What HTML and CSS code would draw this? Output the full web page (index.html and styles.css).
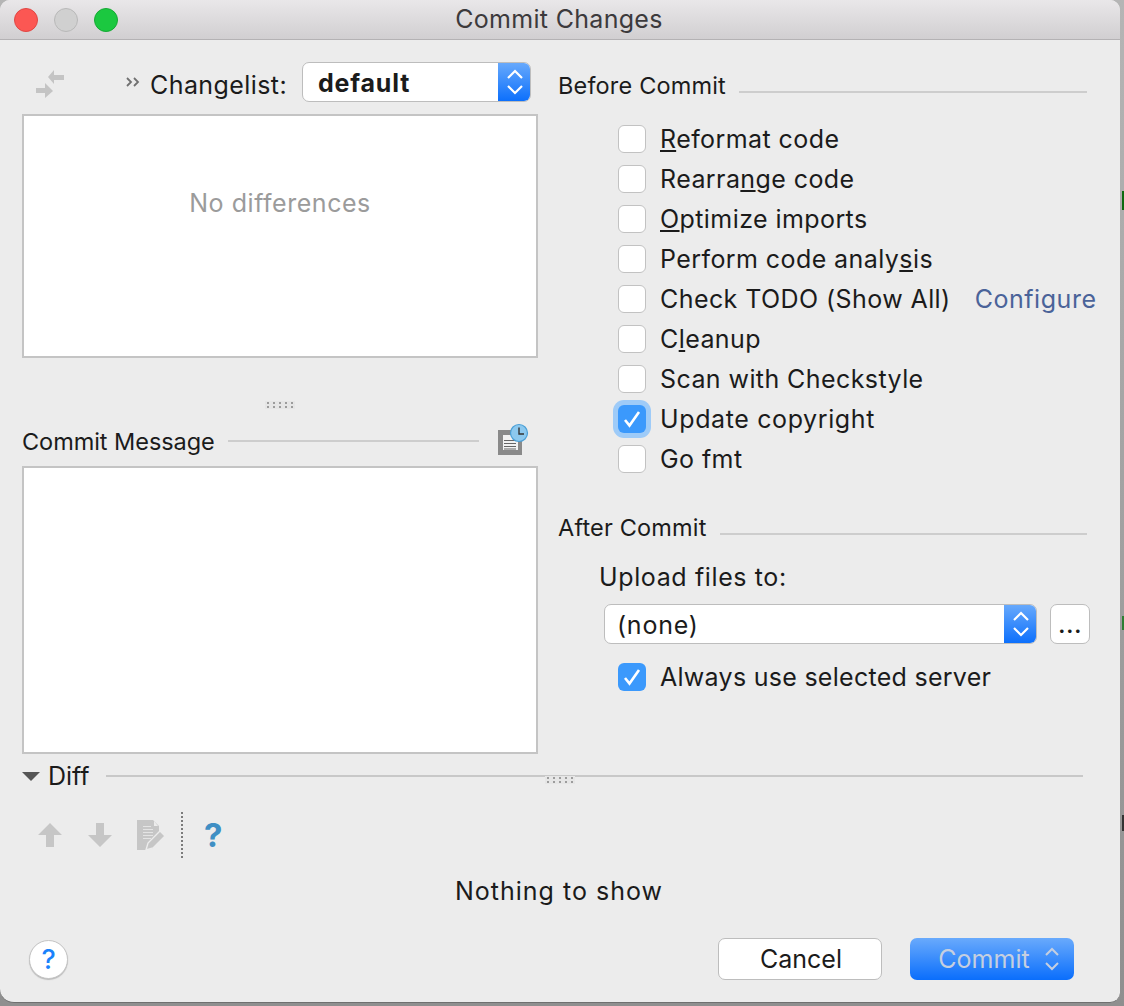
FILE: index.html
```html
<!DOCTYPE html>
<html lang="en">
<head>
    <meta charset="UTF-8">
    <title>Commit Changes</title>
    <link rel="stylesheet" href="styles.css">
</head>
<body>
    <span class="edge-mark edge-mark-a"></span>
    <span class="edge-mark edge-mark-b"></span>
    <span class="edge-mark edge-mark-c"></span>
    <div class="window">
        <div class="titlebar">
            <span class="light light-red"></span>
            <span class="light light-gray"></span>
            <span class="light light-green"></span>
            <div class="title">Commit Changes</div>
        </div>

        <div class="columns">
            <div class="left">
                <div class="changelist-row">
                    <svg class="collapse-icon" width="30" height="30" viewBox="0 0 30 30">
                        <path fill="#c4c4c4" d="M19 1l-6 7 6 7v-4h10V6H19zM10 14l8 8-8 7v-5H1v-5h9z"/>
                    </svg>
                    <svg class="more-icon" width="14" height="12" viewBox="0 0 14 12">
                        <path fill="none" stroke="#707070" stroke-width="1.8" d="M1 2l4 4-4 4M8 2l4 4-4 4"/>
                    </svg>
                    <span class="changelist-label">Changelist:</span>
                    <div class="select select-bold">
                        <span class="select-text">default</span>
                        <span class="select-arrows">
                            <svg width="18" height="28" viewBox="0 0 18 28"><path fill="none" stroke="#fff" stroke-width="2.2" d="M2 10l7-7 7 7M2 18l7 7 7-7"/></svg>
                        </span>
                    </div>
                </div>

                <div class="list-box">No differences</div>
                <div class="grip-row"><span class="grip"></span></div>

                <div class="section-head message-head">
                    <span>Commit Message</span>
                    <span class="rule"></span>
                    <svg class="history-icon" width="32" height="32" viewBox="0 0 32 32">
                        <rect x="1" y="7" width="24" height="25" fill="#8a8a8a"/>
                        <rect x="6" y="12" width="15" height="15" fill="#f2f2f2"/>
                        <path stroke="#666" stroke-width="1" d="M7 17.5h12M7 20.5h12M7 23.5h12M7 26h12"/>
                        <circle cx="22" cy="10" r="8.5" fill="#8cc8ee" stroke="#4a9fd6" stroke-width="1.2"/>
                        <path stroke="#333" stroke-width="1.4" fill="none" d="M22 4.5V11h5"/>
                    </svg>
                </div>
                <div class="message-box"></div>
            </div>

            <div class="right">
                <div class="section-head before-head">
                    <span>Before Commit</span>
                    <span class="rule"></span>
                </div>
                <div class="checks">
                    <label class="check-row"><span class="box"></span><span><u>R</u>eformat code</span></label>
                    <label class="check-row"><span class="box"></span><span>Rearra<u>n</u>ge code</span></label>
                    <label class="check-row"><span class="box"></span><span><u>O</u>ptimize imports</span></label>
                    <label class="check-row"><span class="box"></span><span>Perform code analy<u>s</u>is</span></label>
                    <label class="check-row"><span class="box"></span><span>Check TODO (Show All)</span><a class="configure">Configure</a></label>
                    <label class="check-row"><span class="box"></span><span>C<u>l</u>eanup</span></label>
                    <label class="check-row"><span class="box"></span><span>Scan with Checkstyle</span></label>
                    <label class="check-row"><span class="box box-on box-focus"><svg width="18" height="18" viewBox="0 0 18 18"><path fill="none" stroke="#fff" stroke-width="2.6" d="M2 10l4.5 5.5L16 2"/></svg></span><span class="copyright">Update copyright</span></label>
                    <label class="check-row"><span class="box"></span><span>Go fmt</span></label>
                </div>

                <div class="section-head after-head">
                    <span>After Commit</span>
                    <span class="rule"></span>
                </div>
                <div class="upload-label">Upload files to:</div>
                <div class="upload-row">
                    <div class="select select-wide">
                        <span class="select-text">(none)</span>
                        <span class="select-arrows">
                            <svg width="18" height="28" viewBox="0 0 18 28"><path fill="none" stroke="#fff" stroke-width="2.2" d="M2 10l7-7 7 7M2 18l7 7 7-7"/></svg>
                        </span>
                    </div>
                    <div class="dots-button">...</div>
                </div>
                <label class="check-row always-row"><span class="box box-on"><svg width="18" height="18" viewBox="0 0 18 18"><path fill="none" stroke="#fff" stroke-width="2.6" d="M2 10l4.5 5.5L16 2"/></svg></span><span>Always use selected server</span></label>
            </div>
        </div>

        <div class="diff-head">
            <span class="triangle"></span>
            <span>Diff</span>
            <span class="rule"><span class="grip rule-grip"></span></span>
        </div>

        <div class="diff-tools">
            <svg width="26" height="26" viewBox="0 0 26 26"><path fill="#c6c6c6" d="M13 1L25 13h-8v12H9V13H1z"/></svg>
            <svg width="26" height="26" viewBox="0 0 26 26"><path fill="#c6c6c6" d="M13 25L25 13h-8V1H9v12H1z"/></svg>
            <svg width="30" height="32" viewBox="0 0 30 32">
                <path fill="#c6c6c6" d="M1 1h16l6 6v8l-10 10-2 6H1z"/>
                <path fill="#ececec" d="M18 2l4 5h-4z"/>
                <path stroke="#e4e4e4" stroke-width="1" d="M7 7.5h8M7 10.5h10M7 13.5h10M7 16.5h10M7 19.5h8"/>
                <path fill="#ececec" d="M23 31v-8L13 31z"/>
                <path fill="#c6c6c6" stroke="#ececec" stroke-width="1.4" d="M10 31l2-7 12-12 5 5-12 12z"/>
            </svg>
            <span class="tool-sep"></span>
            <span class="blue-help">?</span>
        </div>

        <div class="nothing">Nothing to show</div>

        <div class="footer">
            <span class="help-button">?</span>
            <div class="button cancel-button">Cancel</div>
            <div class="button commit-button">
                <span>Commit</span>
                <svg width="16" height="26" viewBox="0 0 16 26"><path fill="none" stroke="#c5cfe0" stroke-width="2" d="M2 9l6-6 6 6M2 17l6 6 6-6"/></svg>
            </div>
        </div>
    </div>
</body>
</html>
```

FILE: styles.css
```css
html, body {
    margin: 0;
    padding: 0;
}
body {
    position: relative;
    width: 1124px;
    height: 1006px;
    overflow: hidden;
    background: linear-gradient(#b5b5b5, #8f8f8f);
    font-family: Inter, "Liberation Sans", Arial, sans-serif;
    font-size: 25px;
    letter-spacing: 0.42px;
    color: #1b1b1b;
}
.edge-mark {
    position: absolute;
    left: 1122px;
    width: 2px;
}
.edge-mark-a {
    top: 191px;
    height: 19px;
    background: #0d6a10;
}
.edge-mark-b {
    top: 616px;
    height: 14px;
    background: #2e7d32;
}
.edge-mark-c {
    top: 815px;
    height: 16px;
    background: #333;
}
.window {
    width: 1120px;
    height: 1003px;
    background: #ececec;
    border-radius: 10px 10px 10px 14px;
    box-sizing: border-box;
    overflow: hidden;
    border-bottom: 1px solid #6f6f6f;
}
.titlebar {
    position: relative;
    display: flex;
    align-items: center;
    gap: 16px;
    height: 40px;
    box-sizing: border-box;
    padding-left: 14px;
    background: linear-gradient(#e9e7e9, #d1cfd1);
    border-bottom: 1px solid #b4b2b4;
}
.light {
    width: 24px;
    height: 24px;
    box-sizing: border-box;
    border-radius: 50%;
    border: 1px solid;
}
.light-red {
    background: #fc5753;
    border-color: #df4744;
}
.light-gray {
    background: #d0d0d0;
    border-color: #b8b8b8;
}
.light-green {
    background: #1bc840;
    border-color: #16a934;
}
.title {
    position: absolute;
    left: 0;
    right: 2px;
    top: 4px;
    text-align: center;
    letter-spacing: 0.3px;
    color: #3c3a3c;
}

.columns {
    display: flex;
    padding-left: 22px;
}
.left {
    width: 516px;
}
.right {
    margin-left: 21px;
    width: 540px;
}
.rule {
    flex: 1;
    height: 2px;
    background: #cdcdcd;
}

.changelist-row {
    display: flex;
    align-items: center;
    height: 40px;
    margin-top: 22px;
    position: relative;
}
.collapse-icon {
    margin-left: 13px;
    margin-top: 3px;
}
.more-icon {
    margin-left: 61px;
}
.changelist-label {
    width: 152px;
    margin-left: 10px;
    padding-top: 5px;
    white-space: nowrap;
}
.select {
    display: flex;
    flex: none;
    align-items: center;
    justify-content: space-between;
    height: 40px;
    box-sizing: border-box;
    background: #fff;
    border: 1px solid #bdbdbd;
    border-radius: 7px;
    overflow: hidden;
}
.select-bold {
    width: 229px;
    font-weight: 700;
    letter-spacing: 0.8px;
}
.select-bold .select-text {
    padding-left: 15px;
    padding-top: 2px;
    letter-spacing: 0.8px;
}
.select-text {
    padding-left: 12px;
    padding-top: 2px;
    letter-spacing: 0.75px;
}
.select-arrows {
    display: flex;
    align-items: center;
    justify-content: center;
    width: 33px;
    height: 40px;
    margin-right: -1px;
    background: linear-gradient(#69aafc, #0a6efc);
}
.list-box {
    height: 244px;
    margin-top: 12px;
    box-sizing: border-box;
    padding-top: 72px;
    background: #fff;
    border: 2px solid #c4c4c4;
    text-align: center;
    letter-spacing: 0.55px;
    color: #9b9b9b;
}
.grip-row {
    display: flex;
    justify-content: center;
    height: 94px;
    box-sizing: border-box;
    padding-top: 43px;
    margin-bottom: -86px;
}
.grip {
    display: block;
    width: 30px;
    height: 8px;
    background-color: #e6e6e6;
    background-image: radial-gradient(circle, #9c9c9c 1px, transparent 1.2px);
    background-size: 6px 4px;
}

.section-head {
    display: flex;
    align-items: center;
    gap: 13px;
    font-size: 23.5px;
    letter-spacing: 0.17px;
}
.message-head {
    position: relative;
    height: 40px;
    margin-top: 55px;
    padding-right: 59px;
    letter-spacing: -0.05px;
}
.history-icon {
    position: absolute;
    right: 9px;
    top: 2px;
}
.message-box {
    height: 288px;
    margin-top: 5px;
    box-sizing: border-box;
    background: #fff;
    border: 2px solid #c4c4c4;
}

.before-head {
    margin-top: 25px;
    margin-left: -1px;
    height: 40px;
    width: 529px;
}
.before-head .rule,
.after-head .rule {
    margin-top: 14px;
}
.checks {
    margin-top: 14px;
    padding-left: 59px;
}
.check-row {
    display: flex;
    align-items: center;
    height: 40px;
    gap: 14px;
}
.box {
    position: relative;
    display: flex;
    flex: none;
    align-items: center;
    justify-content: center;
    width: 28px;
    height: 28px;
    box-sizing: border-box;
    background: #fff;
    border: 1px solid #c2c2c2;
    border-radius: 6px;
}
.box-on {
    background: #3b99fc;
    border: none;
}
.box-focus {
    box-shadow: 0 0 0 5px #9ecbf8;
}
.copyright {
    letter-spacing: 0.62px;
}
.configure {
    margin-left: 10px;
    letter-spacing: 0.55px;
    color: #4a6399;
}
.after-head {
    margin-top: 28px;
    margin-left: -1px;
    height: 40px;
    width: 529px;
}
.upload-label {
    margin: 15px 0 0 40px;
    height: 30px;
    line-height: 30px;
    letter-spacing: 0.62px;
}
.upload-row {
    display: flex;
    align-items: center;
    margin: 12px 0 0 45px;
}
.select-wide {
    width: 433px;
}
.dots-button {
    display: flex;
    flex: none;
    justify-content: center;
    align-items: center;
    width: 40px;
    height: 40px;
    margin-left: 13px;
    box-sizing: border-box;
    background: #fff;
    border: 1px solid #bdbdbd;
    border-radius: 7px;
    line-height: 1;
    font-weight: 500;
}
.always-row {
    margin: 13px 0 0 59px;
    letter-spacing: 0.28px;
}

.diff-head {
    display: flex;
    align-items: center;
    height: 30px;
    margin: 7px 37px 0 22px;
    letter-spacing: 0;
}
.triangle {
    width: 0;
    height: 0;
    border-left: 9px solid transparent;
    border-right: 9px solid transparent;
    border-top: 9px solid #555;
    margin-right: 8px;
}
.diff-head .rule {
    position: relative;
    margin-left: 16px;
    background: #c8c8c8;
}
.rule-grip {
    position: absolute;
    left: 439px;
    top: 1px;
}
.diff-tools {
    display: flex;
    align-items: center;
    height: 46px;
    margin: 21px 0 0 37px;
    gap: 24px;
}
.diff-tools svg:nth-child(3) {
    margin-left: -1px;
    margin-right: -9px;
}
.tool-sep {
    width: 0;
    height: 46px;
    border-left: 2px dotted #7b7b7b;
}
.blue-help {
    margin-left: -3px;
    font-size: 33px;
    font-weight: 700;
    color: #3f8fc4;
}
.nothing {
    margin-top: 17px;
    height: 33px;
    line-height: 33px;
    text-align: center;
    padding-right: 2px;
    letter-spacing: 1.02px;
}
.footer {
    display: flex;
    align-items: center;
    height: 42px;
    margin-top: 30px;
    padding-left: 29px;
    letter-spacing: 0;
}
.help-button {
    display: flex;
    justify-content: center;
    align-items: center;
    width: 39px;
    height: 39px;
    box-sizing: border-box;
    background: #fff;
    border: 1px solid #c4c4c4;
    border-radius: 50%;
    box-shadow: 0 1px 1px #bbb;
    color: #1a82fb;
    font-weight: 500;
    font-size: 27px;
}
.button {
    display: flex;
    align-items: center;
    justify-content: center;
    width: 164px;
    height: 42px;
    box-sizing: border-box;
    border-radius: 7px;
}
.cancel-button {
    margin-left: 650px;
    padding-left: 2px;
    background: #fff;
    border: 1px solid #bdbdbd;
}
.commit-button {
    margin-left: 28px;
    gap: 14px;
    padding-left: 14px;
    background: linear-gradient(#69aafc, #0a6efc);
    color: #c5cfe0;
}
```
